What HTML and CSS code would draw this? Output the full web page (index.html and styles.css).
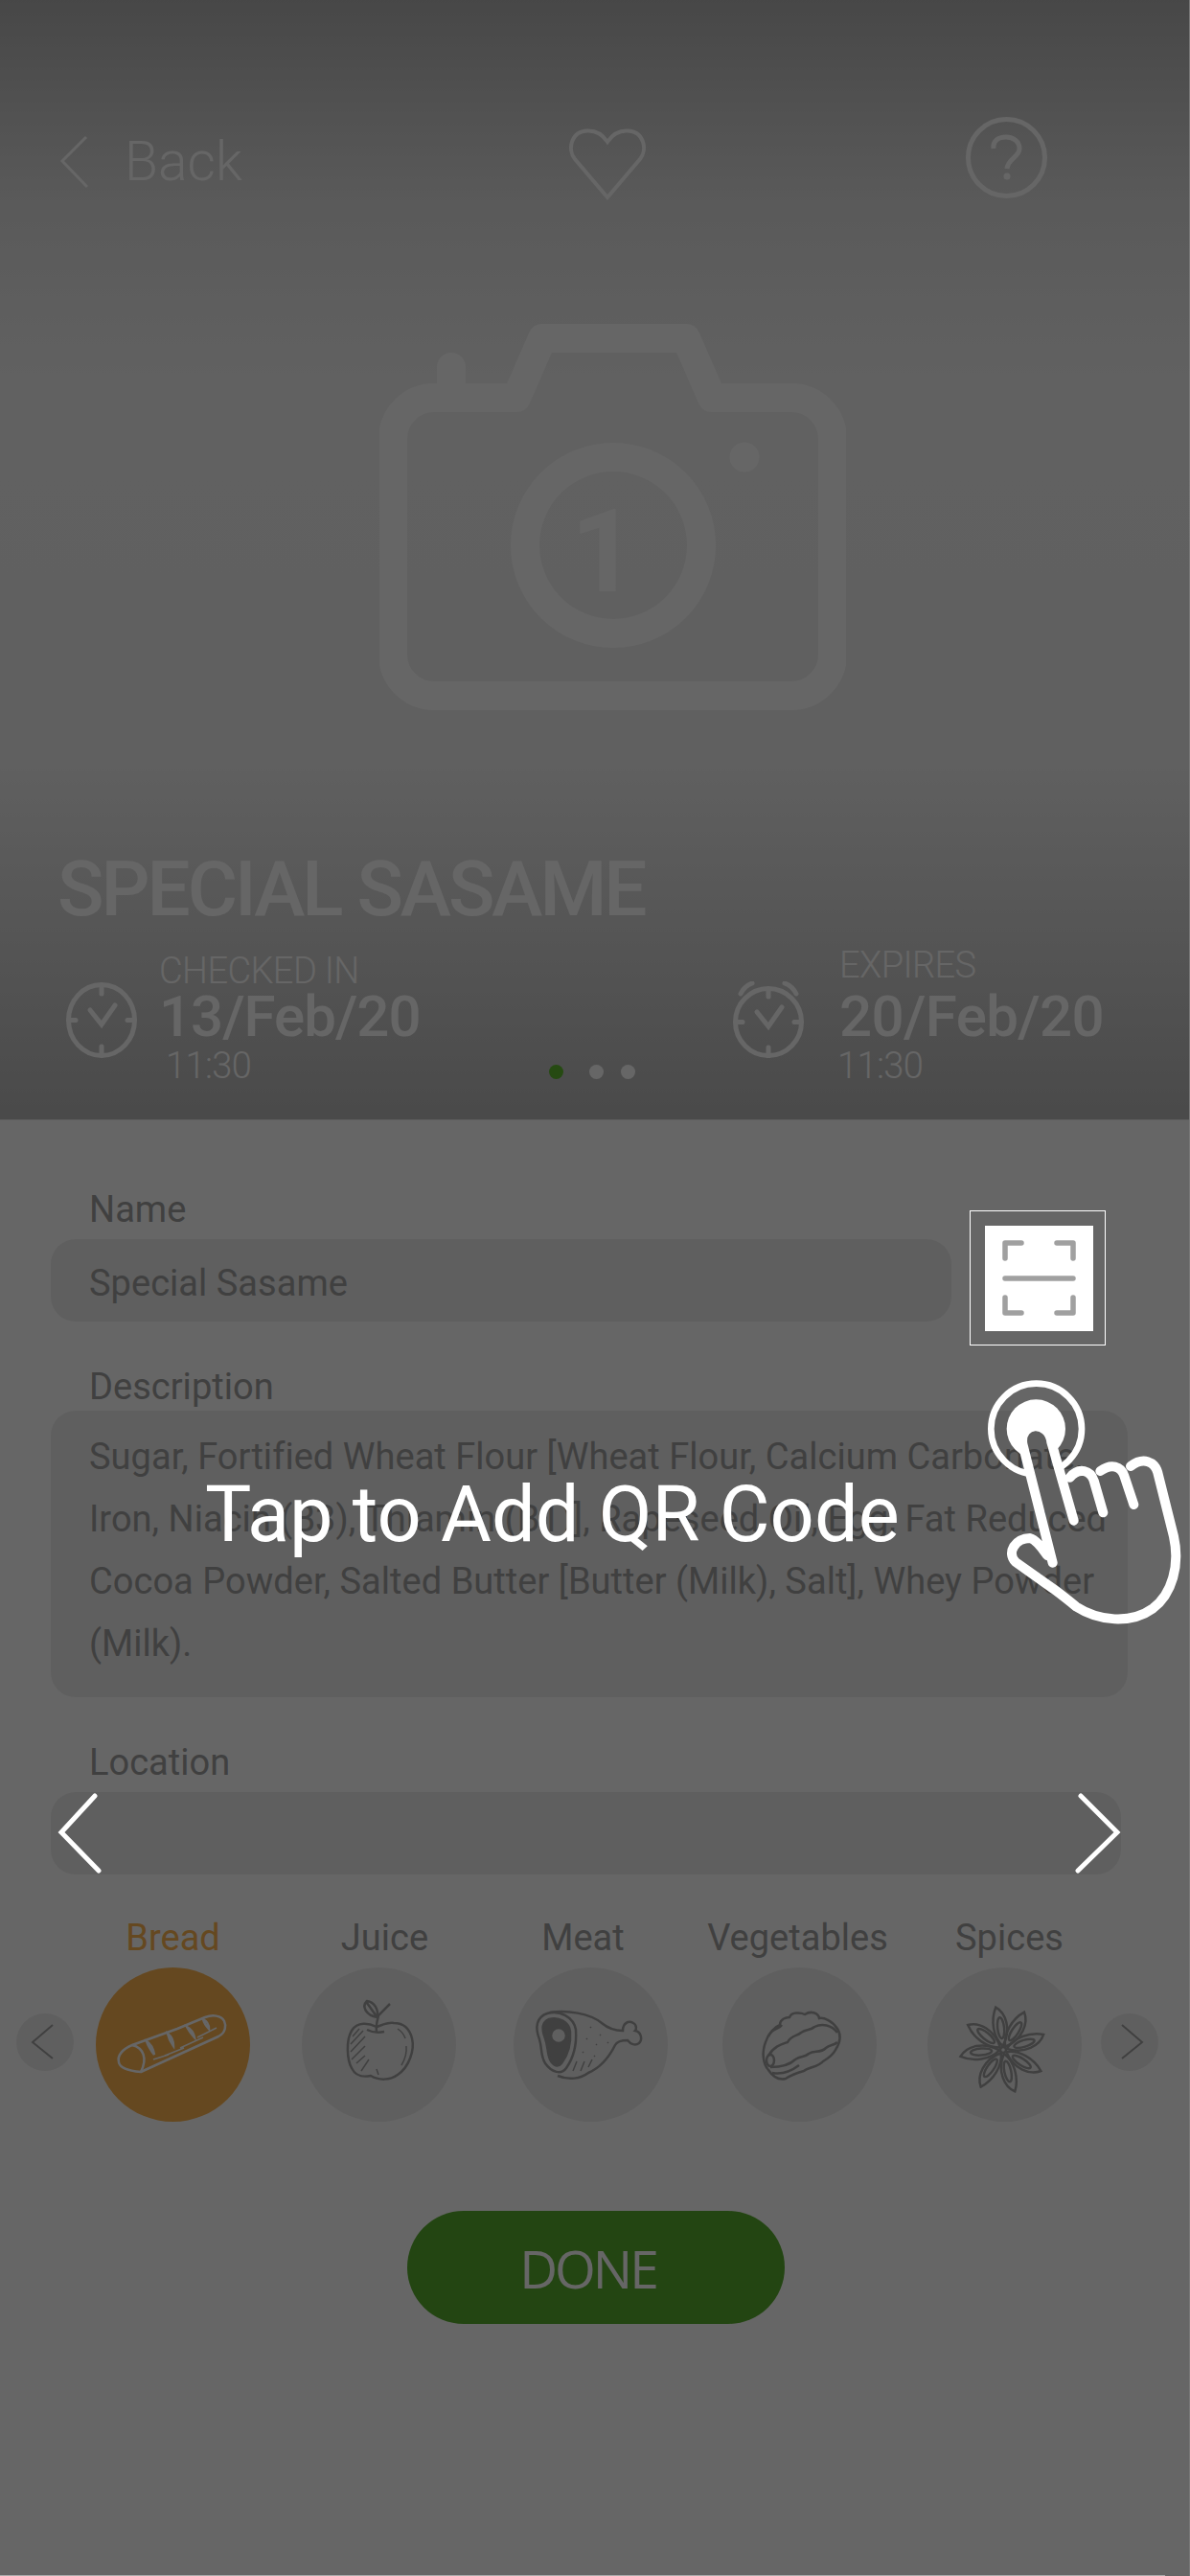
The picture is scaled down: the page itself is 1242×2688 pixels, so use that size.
FILE: index.html
```html
<!DOCTYPE html>
<html lang="en">
<head>
    <meta charset="UTF-8">
    <meta name="viewport" content="width=device-width, initial-scale=1.0">
    <title>Add Item</title>
    <link rel="stylesheet" href="styles.css">
</head>
<body>

<div class="screen">
    <header class="hero">
        <div class="topbar">
            <div class="back">
                <svg class="back-chevron" viewBox="0 0 30 56"><path d="M28 2 L3 27 L29 54"/></svg>
                <span>Back</span>
            </div>
            <svg class="heart" viewBox="0 0 82 76"><path d="M41 72 L7 32 C-1 22 3 3 20 2.5 C30 2 37 8 41 14 C45 8 52 2 62 2.5 C79 3 83 22 75 32 Z"/></svg>
            <svg class="help" viewBox="0 0 85 85">
                <circle cx="42.500" cy="42.500" r="40"/>
                <path d="M29 33 C28 25 34 21 42 21 C50 21 56 26 56 33 C56 42 44 43 43 54"/>
                <circle class="help-dot" cx="43" cy="62" r="3.500"/>
            </svg>
        </div>

        <svg class="camera" viewBox="396 337 487 404">
            <path d="M471 400 V383"/>
            <path d="M453 415 H539 L566 353 H716 L743 415 H826 A43 43 0 0 1 869 458 V683 A43 43 0 0 1 826 726 H453 A43 43 0 0 1 410 683 V458 A43 43 0 0 1 453 415 Z"/>
            <circle cx="640" cy="569" r="92"/>
            <circle class="camera-dot" cx="777" cy="477" r="15.500"/>
            <text x="630" y="617">1</text>
        </svg>

        <h1 class="title">SPECIAL SASAME</h1>

        <div class="dates">
            <div class="date date-in">
                <svg class="clock" viewBox="0 0 74 79">
                    <ellipse cx="37" cy="39.500" rx="34.500" ry="37"/>
                    <path d="M37 3 V12 M37 67 V76 M3 39.500 H10 M64 39.500 H71"/>
                    <path d="M25 29 L37 44 L51 24"/>
                </svg>
                <div class="date-text">
                    <div class="date-label">CHECKED IN</div>
                    <div class="date-day">13/Feb/20</div>
                    <div class="date-time">11:30</div>
                </div>
            </div>
            <div class="dots">
                <span class="dot dot-active"></span>
                <span class="dot"></span>
                <span class="dot"></span>
            </div>
            <div class="date date-out">
                <svg class="clock clock-alarm" viewBox="0 0 74 80">
                    <ellipse cx="37" cy="42.500" rx="34.500" ry="35"/>
                    <path d="M37 8 V16 M37 69 V78 M3 42.500 H10 M64 42.500 H71"/>
                    <path d="M25 32 L37 47 L51 27"/>
                    <path d="M8 13 Q12 5 20 2 M66 13 Q62 5 54 2"/>
                </svg>
                <div class="date-text">
                    <div class="date-label date-label-high">EXPIRES</div>
                    <div class="date-day">20/Feb/20</div>
                    <div class="date-time">11:30</div>
                </div>
            </div>
        </div>
    </header>

    <main class="panel">
        <label class="field-label">Name</label>
        <div class="input input-name">Special Sasame</div>

        <label class="field-label field-label-desc">Description</label>
        <div class="textarea">
            Sugar, Fortified Wheat Flour [Wheat Flour, Calcium Carbonate,<br>
            Iron, Niacin (B3), Thiamin (B1)], Rapeseed Oil, Egg, Fat Reduced<br>
            Cocoa Powder, Salted Butter [Butter (Milk), Salt], Whey Powder<br>
            (Milk).
        </div>

        <label class="field-label field-label-loc">Location</label>
        <div class="input input-loc"></div>

        <div class="cats">
            <div class="arrow">
                <svg viewBox="0 0 60 60"><path d="M38 12 L17 30 L38 47"/></svg>
            </div>
            <div class="cat cat-bread">
                <span class="cat-name">Bread</span>
                <div class="cat-circle">
                    <svg viewBox="0 0 161 161">
                        <path d="M47 109 L128 72 C136 68 136 60 134 56 C131 50 122 49 114 52 L85 64 L38 81 C28 85 22 92 24 99 C25 105 36 108 47 109 Z"/>
                        <path d="M38 81 C50 84 54 95 47 109"/>
                        <path d="M53 77 C58 80 60 85 61 91 C58 87 55 83 53 77 Z M75 69 C79 72 81 77 81 82 C78 78 76 74 75 69 Z M95 62 C99 64 102 68 103 73 C100 70 97 66 95 62 Z M112 54 C116 56 118 60 118 64 C115 61 113 58 112 54 Z"/>
                        <path class="thin" d="M60 96 L76 91 M72 92 L92 84 M88 84 L112 73 M106 73 L126 63"/>
                    </svg>
                </div>
            </div>
            <div class="cat cat-juice">
                <span class="cat-name">Juice</span>
                <div class="cat-circle">
                    <svg viewBox="0 0 161 161">
                        <path d="M78 62 C70 58 58 56 52 66 C46 76 47 96 52 105 C56 113 62 115 72 113 C80 118 92 118 100 112 C112 104 118 86 115 74 C112 62 104 58 96 58 C90 57 84 60 78 62 Z"/>
                        <path d="M78 67 C77 60 79 55 80 50 L92 38 M68 65 Q76 69 86 67"/>
                        <path d="M68 35 C62 41 67 50 79 52 C80 44 76 36 68 35 Z M68 37 L78 51"/>
                        <path class="thin" d="M53 72 L60 64 M51 80 L64 66 M51 88 L66 72 M52 96 L66 82 M57 100 L66 92 M62 108 L70 96 M78 106 L80 112 M104 102 Q110 92 109 82 M100 64 Q106 68 108 74"/>
                    </svg>
                </div>
            </div>
            <div class="cat cat-meat">
                <span class="cat-name">Meat</span>
                <div class="cat-circle">
                    <svg viewBox="0 0 161 161">
                        <path d="M35 48 C48 44 63 52 65 65 C66 80 62 95 55 105 C50 112 40 110 33 100 C28 92 30 85 27 75 C22 62 24 52 35 48 Z"/>
                        <path class="meat-fill" d="M37 54 C47 51 58 57 59 67 C60 80 56 92 50 100 C46 105 41 102 38 96 C35 89 36 82 33 74 C29 64 30 57 37 54 Z"/>
                        <circle class="meat-bone" cx="47" cy="71" r="8"/>
                        <path d="M38 47 C55 44 80 48 92 58 C98 63 106 66 114 66 C114 58 120 55 125 58 C129 60 128 65 127 66 C133 67 135 75 131 79 C127 82 122 80 119 76 C113 76 108 77 106 81 C100 93 92 104 78 110 C70 116 58 118 46 113"/>
                        <path class="thin" d="M80 62 L81 63 M90 70 L91 71 M76 74 L77 75 M86 80 L87 81 M98 78 L99 79 M72 88 L73 89 M84 92 L85 93 M62 108 L66 98 M70 108 L74 98 M78 104 L82 96"/>
                    </svg>
                </div>
            </div>
            <div class="cat cat-veg">
                <span class="cat-name">Vegetables</span>
                <div class="cat-circle">
                    <svg viewBox="0 0 161 161">
                        <path d="M45 78 C48 68 55 62 60 60 C60 54 66 52 70 52 C72 46 82 47 86 49 C92 45 100 47 101 53 C106 52 115 56 120 64 C125 72 122 80 118 86 C115 92 110 95 105 98 C100 104 90 104 85 108 C78 110 72 112 66 116 C58 118 52 113 48 107 C42 100 41 88 45 78 Z"/>
                        <path d="M48 92 C54 82 62 80 68 78 C72 70 78 72 82 68 C88 64 92 66 96 62 C104 58 114 60 120 68"/>
                        <path d="M50 104 C60 104 70 102 76 96 C82 92 86 94 90 90 C96 86 102 90 108 84 C112 80 116 82 120 78"/>
                        <path d="M48 72 C52 62 58 66 62 60 M52 110 C62 112 72 108 80 102"/>
                        <ellipse cx="50" cy="97" rx="4" ry="6"/>
                    </svg>
                </div>
            </div>
            <div class="cat cat-spice">
                <span class="cat-name">Spices</span>
                <div class="cat-circle">
                    <svg viewBox="0 0 161 161">
                        <defs>
                            <g id="petal">
                                <path d="M0 -4 C-9 -14 -10 -32 -3 -45 C7 -38 11 -20 0 -4 Z"/>
                                <ellipse cx="0" cy="-23" rx="3.500" ry="11"/>
                            </g>
                        </defs>
                        <g transform="translate(79 86)">
                            <use href="#petal" transform="rotate(-6)"/>
                            <use href="#petal" transform="rotate(33)"/>
                            <use href="#petal" transform="rotate(73)"/>
                            <use href="#petal" transform="rotate(123)"/>
                            <use href="#petal" transform="rotate(168)"/>
                            <use href="#petal" transform="rotate(215)"/>
                            <use href="#petal" transform="rotate(265)"/>
                            <use href="#petal" transform="rotate(309)"/>
                            <circle r="3"/>
                        </g>
                    </svg>
                </div>
            </div>
            <div class="arrow arrow-next">
                <svg viewBox="0 0 60 60"><path d="M22 12 L43 30 L22 47"/></svg>
            </div>
        </div>

        <button class="done" type="button">DONE</button>
    </main>

    <div class="dim"></div>

    <!-- coach mark, sits above the dim layer -->
    <div class="scan">
        <div class="scan-box">
            <svg viewBox="0 0 113 110">
                <path d="M21 34 V18 H38 M75 18 H92 V34 M21 75 V91 H38 M75 91 H92 V75 M21 55 H92"/>
            </svg>
        </div>
    </div>
    <svg class="hand" viewBox="0 0 846 1440">
        <defs>
            <mask id="fingerCut">
                <rect width="846" height="1440" fill="#fff"/>
                <path fill="#000" d="M322 800 C312 730 405 725 412 795 L482 1040 L416 1172 Z"/>
            </mask>
        </defs>
        <g mask="url(#fingerCut)">
            <circle class="hand-ring" cx="365" cy="753" r="142"/>
            <circle class="hand-disc" cx="364" cy="753" r="92"/>
        </g>
        <path class="hand-line" d="M416 1172 L322 800 C312 730 405 725 412 795 L482 1040 M470 905 C500 870 535 885 545 915 L574 1015 M565 885 C600 860 630 870 640 900 L670 990 M660 870 C700 840 735 855 745 890 L795 1090 C815 1180 790 1270 730 1315 C660 1365 560 1355 490 1310 C460 1285 440 1270 420 1255 L300 1170 C270 1140 300 1095 345 1095 C365 1100 385 1130 400 1150"/>
    </svg>
    <div class="tap-text">Tap to Add QR Code</div>
    <svg class="coach-arrow coach-prev" viewBox="0 0 50 84"><path d="M40 3 L5 41 L44 81"/></svg>
    <svg class="coach-arrow coach-next" viewBox="0 0 50 84"><path d="M6 3 L44 41 L3 81"/></svg>
</div>

</body>
</html>
```

FILE: styles.css
```css
* {
    box-sizing: border-box;
}

body {
    margin: 0;
    font-family: Roboto, "Liberation Sans", sans-serif;
    background-color: #fff;
}

svg {
    display: block;
    fill: none;
}

.screen {
    position: relative;
    width: 1242px;
    height: 2688px;
    overflow: hidden;
    background-color: #fff;
}

/* thin light edges left over on the capture */
.screen::before {
    content: "";
    position: absolute;
    top: 0;
    right: 0;
    z-index: 2;
    width: 1px;
    height: 100%;
    background-color: #777;
}

.screen::after {
    content: "";
    position: absolute;
    left: 0;
    bottom: 0;
    z-index: 2;
    width: 1216px;
    height: 1px;
    background-color: #aaa;
}

/* top part with the product photo placeholder */
.hero {
    height: 1169px;
    padding-top: 122px;
    border-bottom: 1px solid #ececec;
    color: #fff;
    background: linear-gradient(to bottom, #b2b2b2 0, #e0e0e0 210px, #f3f3f3 400px, #efefef 800px, #b8b8b8 1168px);
}

.topbar {
    display: grid;
    grid-template-columns: 531px 415px 85px;
    height: 85px;
    padding-left: 62px;
}

.back {
    display: flex;
    align-items: flex-start;
    padding-top: 19px;
    font-size: 57px;
    font-weight: 300;
    line-height: 56px;
}

.back span {
    margin-left: 38px;
}

.back-chevron {
    width: 30px;
    height: 56px;
    stroke: #fff;
    stroke-width: 3;
}

.heart {
    width: 82px;
    height: 76px;
    margin-top: 12px;
    stroke: #fff;
    stroke-width: 4;
}

.help {
    width: 85px;
    height: 85px;
    stroke: #fff;
    stroke-width: 5;
}

.help-dot {
    fill: #fff;
    stroke: none;
}

.camera {
    width: 487px;
    height: 404px;
    margin: 130px 0 0 396px;
    stroke: #fff;
    stroke-width: 30;
    stroke-linecap: round;
    stroke-linejoin: round;
}

.camera-dot {
    fill: #fff;
    stroke: none;
}

.camera text {
    fill: #fff;
    stroke: none;
    font-size: 120px;
    font-weight: 700;
    text-anchor: middle;
}

.title {
    margin: 141px 0 0 60px;
    font-size: 80px;
    font-weight: 500;
    line-height: 92px;
    letter-spacing: -3px;
}

.dates {
    display: flex;
    margin-top: 15px;
    padding-left: 69px;
}

.date {
    display: flex;
    width: 386px;
}

.date-in {
    width: 504px;
    padding-top: 6px;
}

.clock {
    flex: none;
    width: 74px;
    height: 79px;
    margin-top: 30px;
    stroke: #fff;
    stroke-width: 5;
    stroke-linecap: round;
}

.clock-alarm {
    height: 80px;
    margin-top: 35px;
}

.date-text {
    margin-left: 23px;
}

.clock-alarm + .date-text {
    margin-left: 37px;
}

.date-label {
    font-size: 38px;
    font-weight: 300;
    line-height: 36px;
    letter-spacing: -0.6px;
}

.date-label-high {
    margin-bottom: 6px;
}

.date-day {
    font-size: 60px;
    font-weight: 500;
    line-height: 60px;
    letter-spacing: -1px;
}

.date-out .date-day {
    letter-spacing: -0.6px;
}

.date-time {
    margin-top: 2px;
    margin-left: 7px;
    font-size: 38px;
    font-weight: 300;
    line-height: 38px;
    letter-spacing: -0.6px;
}

.date-out .date-time {
    margin-left: -2px;
}

.dots {
    display: flex;
    gap: 18px;
    width: 192px;
    height: 15px;
    margin-top: 122px;
}

.dot {
    width: 15px;
    height: 15px;
    border-radius: 50%;
    background-color: #fff;
    opacity: 1;
}

.dot-active {
    margin-right: 9px;
    background-color: #5fb82f;
}

/* form */
.panel {
    padding: 70px 0 0 53px;
    color: #a0a0a0;
    font-size: 38px;
    line-height: 46px;
    letter-spacing: 0.03px;
}

.field-label {
    display: block;
    margin: 0 0 8px 40px;
}

.field-label-desc {
    margin-top: 45px;
    margin-bottom: 2px;
}

.field-label-loc {
    margin-top: 45px;
}

.input {
    height: 86px;
    padding: 23px 40px;
    border-radius: 26px;
    background-color: #eee;
}

.input-name {
    width: 940px;
}

.input-loc {
    width: 1117px;
}

.textarea {
    width: 1124px;
    height: 299px;
    padding: 16px 0 0 40px;
    border-radius: 26px;
    background-color: #eee;
    line-height: 65px;
    white-space: nowrap;
}

.cats {
    display: flex;
    margin: 43px 0 0 -36px;
}

.cat {
    display: flex;
    flex-direction: column;
    align-items: center;
    flex: none;
    width: 161px;
}

.cat-name {
    margin-bottom: 8px;
    white-space: nowrap;
}

.cat-circle {
    width: 161px;
    height: 161px;
    border-radius: 50%;
    background-color: #eee;
}

.cat-circle svg {
    width: 161px;
    height: 161px;
    stroke: #a0a0a0;
    stroke-width: 2.500;
}

.cat-circle .thin {
    stroke-width: 1.500;
}

.cat-bread {
    margin-left: 23px;
    color: #fdb450;
}

.cat-bread .cat-circle {
    background-color: #fdb450;
}

.cat-bread .cat-circle svg {
    stroke: #fff;
}

.cat-juice {
    margin-left: 54px;
}

.cat-juice .cat-name {
    margin-left: 12px;
}

.cat-meat {
    margin-left: 60px;
}

.cat-meat .cat-name {
    margin-right: 16px;
}

.cat-veg {
    margin-left: 57px;
}

.cat-veg .cat-name {
    margin-right: 4px;
}

.cat-spice {
    margin-left: 53px;
}

.cat-spice .cat-name {
    margin-left: 10px;
}

.meat-fill {
    fill: #a0a0a0;
}

.meat-bone {
    fill: #eee;
}

.arrow {
    flex: none;
    width: 60px;
    height: 60px;
    margin-top: 102px;
    border-radius: 50%;
    background-color: #eee;
}

.arrow svg {
    width: 60px;
    height: 60px;
    stroke: #a0a0a0;
    stroke-width: 2;
}

.arrow-next {
    margin-left: 20px;
}

.done {
    display: block;
    width: 394px;
    height: 118px;
    margin: 93px 0 0 372px;
    padding: 0 17px 0 0;
    border: none;
    border-radius: 59px;
    background-color: #58ac2d;
    color: #fff;
    font-family: "Open Sans", sans-serif;
    font-size: 55px;
    letter-spacing: -3px;
}

/* dim layer and what sits on it */
.dim {
    position: absolute;
    inset: 0;
    background-color: rgba(0, 0, 0, 0.6);
}

.scan {
    position: absolute;
    left: 1012px;
    top: 1263px;
    width: 142px;
    height: 141px;
    padding: 15px 14px 0 15px;
    border: 1px solid #fff;
}

.scan-box {
    width: 113px;
    height: 110px;
    background-color: #fff;
}

.scan-box svg {
    width: 113px;
    height: 110px;
    stroke: #a0a0a0;
    stroke-width: 5.500;
    stroke-linecap: round;
    stroke-linejoin: round;
}

.hand {
    position: absolute;
    left: 960px;
    top: 1240px;
    width: 282px;
    height: 480px;
}

.hand-ring {
    stroke: #fff;
    stroke-width: 20;
}

.hand-disc {
    fill: #fff;
}

.hand-line {
    stroke: #fff;
    stroke-width: 30;
    stroke-linecap: round;
    stroke-linejoin: round;
}

.tap-text {
    position: absolute;
    left: 214px;
    top: 1534px;
    color: #fff;
    font-size: 81.200px;
    line-height: 94px;
    white-space: nowrap;
}

.coach-arrow {
    position: absolute;
    top: 1871px;
    width: 50px;
    height: 84px;
    stroke: #fff;
    stroke-width: 5;
    stroke-linecap: round;
}

.coach-prev {
    left: 59px;
}

.coach-next {
    left: 1122px;
}
```
